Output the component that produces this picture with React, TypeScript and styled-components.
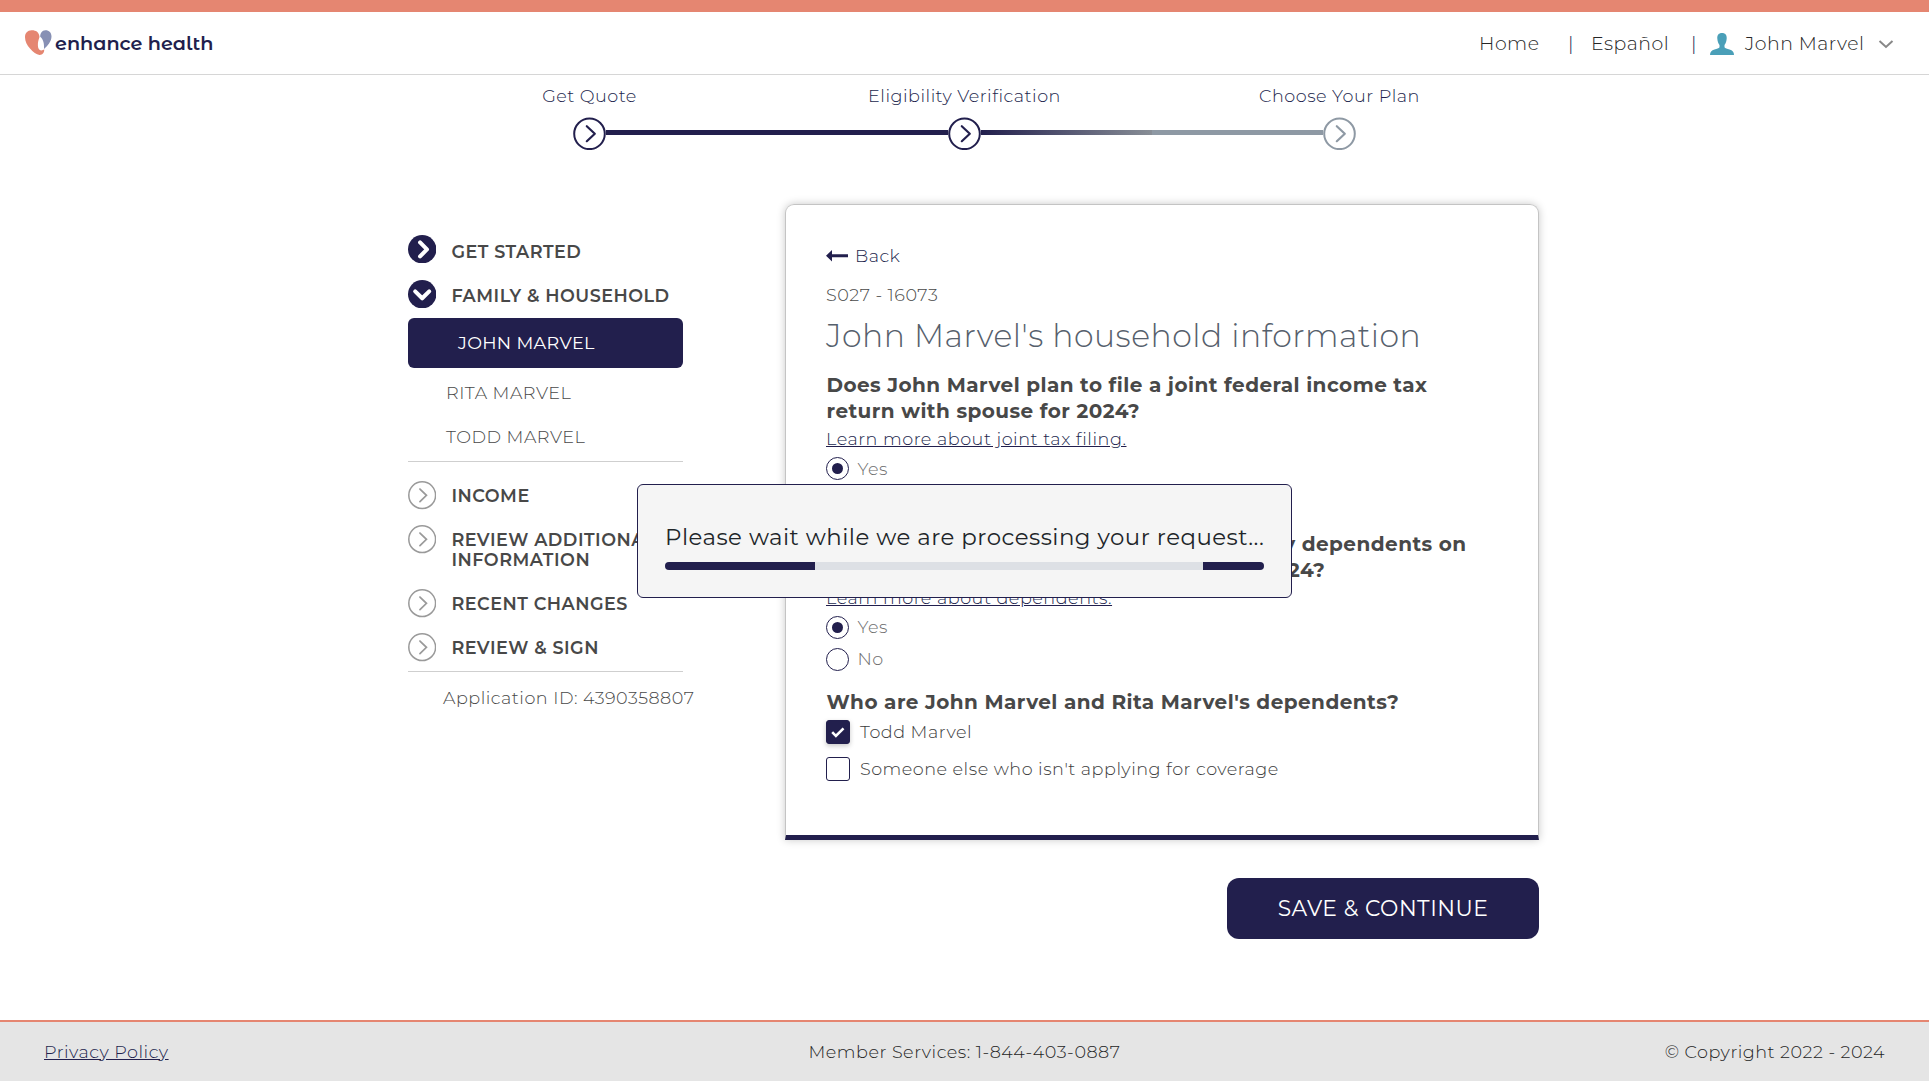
import React from "react";
import styled, { createGlobalStyle, css } from "styled-components";

const navy = "#221f4d";
const coral = "#e58671";

const GlobalStyle = createGlobalStyle`
  * { box-sizing: border-box; }
  body {
    margin: 0;
    background: #fff;
    color: #262626;
    font-family: Montserrat, "Open Sans", sans-serif;
    font-weight: 300;
    font-size: 17.6px;
    line-height: 24px;
    letter-spacing: 0.5px;
  }
  p, h1, h2 { margin: 0; }
`;

const Page = styled.div`
  display: flex;
  flex-direction: column;
  height: 1081px;
  overflow: hidden;
`;

/* Header */
const Header = styled.header`
  display: flex;
  justify-content: space-between;
  align-items: center;
  height: 75px;
  padding: 0 35px 0 25px;
  border-top: 12px solid ${coral};
  border-bottom: 1px solid #d6d6d6;
`;
const Brand = styled.div`
  display: flex;
  align-items: center;
  gap: 3px;
`;
const BrandName = styled.span`
  color: ${navy};
  font: 600 19.2px/24px "Montserrat Alternates", Montserrat, sans-serif;
  letter-spacing: -0.02px;
  padding-bottom: 1px;
`;
const TopNav = styled.nav`
  display: grid;
  grid-template-columns: 89px 23px 100px 19px 35px 133px 16px;
  align-items: center;
  padding-top: 1px;
  font-size: 18.9px;
`;
const Divider = styled.span`
  color: ${navy};
`;

/* Progress steps */
const Steps = styled.section`
  width: 1125px;
  margin: 9px auto 0;
`;
const StepLabels = styled.div`
  display: grid;
  grid-template-columns: repeat(3, 1fr);
  text-align: center;
  color: ${navy};
`;
const StepTrack = styled.div`
  display: flex;
  align-items: flex-start;
  width: 783px;
  margin: 9px auto 0;
`;
const StepLine = styled.div<{ $partial?: boolean }>`
  flex: 1;
  height: 5px;
  margin-top: 13px;
  background: ${(p) =>
    p.$partial ? `linear-gradient(90deg, ${navy} 0%, #888e96 50%, #8e99a4 50%)` : navy};
`;

/* Body */
const Content = styled.div`
  display: flex;
  gap: 102px;
  padding: 54px 0 0 408px;
  flex: 1;
`;
const Sidebar = styled.aside`
  width: 275px;
  padding-top: 31px;
  color: #484848;
`;
const NavItem = styled.div<{ $height: number; $drop: number }>`
  display: flex;
  gap: 15px;
  height: ${(p) => p.$height}px;
  font-weight: 600;
  line-height: 20px;
  white-space: nowrap;
  svg { flex: none; }
  span { padding-top: ${(p) => p.$drop}px; }
`;
const Person = styled.div<{ $active?: boolean }>`
  height: 44px;
  line-height: 44px;
  padding-left: 38px;
  ${(p) =>
    p.$active &&
    css`
      height: 50px;
      line-height: 50px;
      padding-left: 50px;
      margin-bottom: 3px;
      border-radius: 6px;
      background: ${navy};
      color: #fff;
      font-weight: 400;
      letter-spacing: 0.33px;
    `}
`;
const Rule = styled.div<{ $above?: number; $below: number }>`
  height: 1px;
  background: #cfcfcf;
  margin: ${(p) => p.$above ?? 0}px 0 ${(p) => p.$below}px;
`;
const AppId = styled.p`
  padding-left: 35px;
  line-height: 20px;
  white-space: nowrap;
`;

const Main = styled.main`
  display: flex;
  flex-direction: column;
  align-items: flex-end;
  gap: 38px;
`;
const Card = styled.section`
  width: 754px;
  height: 636px;
  padding: 39px 40px 0;
  border: 1px solid #c4c4c4;
  border-bottom: 5px solid ${navy};
  border-radius: 9px 9px 0 0;
  box-shadow: 0 0 8px rgba(0, 0, 0, 0.22);
  color: #484848;
`;
const BackLink = styled.a`
  display: flex;
  align-items: center;
  gap: 6px;
  color: ${navy};
`;
const ScreenCode = styled.p`
  margin-top: 15px;
`;
const Title = styled.h1`
  margin-top: 9px;
  font-size: 31.5px;
  font-weight: 300;
  line-height: 40px;
  color: #56606c;
`;
const Question = styled.h2<{ $gap: number }>`
  margin-top: ${(p) => p.$gap}px;
  padding-left: 0.5px;
  font-size: 20px;
  font-weight: 700;
  line-height: 26px;
  letter-spacing: 0.45px;
  white-space: nowrap;
`;
const HelpLink = styled.a`
  display: block;
  width: max-content;
  margin: 3px 0 6px;
  color: ${navy};
  letter-spacing: 0.53px;
  text-decoration: underline;
`;
const Option = styled.label<{ $gap?: number; $muted?: boolean }>`
  display: flex;
  align-items: center;
  height: ${(p) => (p.$muted ? 23 : 24)}px;
  gap: ${(p) => (p.$muted ? 8.5 : 10)}px;
  margin-top: ${(p) => p.$gap ?? 0}px;
  color: ${(p) => (p.$muted ? "#6e6e6e" : "#3c3c3c")};
`;
const RadioMark = styled.span<{ $on?: boolean }>`
  display: grid;
  place-items: center;
  width: 23px;
  height: 23px;
  border: 1px solid ${navy};
  border-radius: 50%;
  &::after {
    content: "";
    width: 11px;
    height: 11px;
    border-radius: 50%;
    background: ${(p) => (p.$on ? navy : "transparent")};
  }
`;
const CheckMark = styled.span<{ $on?: boolean }>`
  display: grid;
  place-items: center;
  width: 24px;
  height: 24px;
  border: 1px solid ${navy};
  border-radius: 3px;
  background: ${(p) => (p.$on ? navy : "#fff")};
  box-shadow: ${(p) => (p.$on ? "0 2px 5px rgba(0,0,0,.22)" : "none")};
`;
const SaveButton = styled.button`
  width: 312px;
  height: 61px;
  padding: 0 0 2px;
  border: 0;
  border-radius: 12px;
  background: ${navy};
  color: #fff;
  font: 400 21.8px/28px Montserrat, sans-serif;
  letter-spacing: 0.5px;
`;

/* Footer */
const Footer = styled.footer`
  display: grid;
  grid-template-columns: 1fr auto 1fr;
  align-items: center;
  height: 61px;
  padding: 0 44px;
  border-top: 2px solid ${coral};
  background: #e5e5e5;
  > :last-child { text-align: right; }
`;
const PolicyLink = styled.a`
  color: ${navy};
  text-decoration: underline;
`;

/* Processing dialog laid over the form */
const Dialog = styled.div`
  position: absolute;
  left: 637px;
  top: 484px;
  width: 655px;
  height: 114px;
  padding: 37px 27px 0;
  border: 1px solid ${navy};
  border-radius: 6px;
  background: #f5f5f5;
  color: #212529;
  font-size: 22.88px;
  font-weight: 400;
  line-height: 30px;
  letter-spacing: 0.48px;
  white-space: nowrap;
`;
const Bar = styled.div`
  display: flex;
  justify-content: space-between;
  height: 8px;
  margin-top: 10px;
  border-radius: 4px;
  overflow: hidden;
  background: #dde0e5;
`;
const BarFill = styled.div<{ $width: number }>`
  width: ${(p) => p.$width}px;
  background: ${navy};
`;

const StepIcon = ({ color = navy }: { color?: string }) => (
  <svg width="33" height="33" viewBox="0 0 33 33" fill="none" stroke={color}>
    <circle cx="16.5" cy="16.8" r="15.3" strokeWidth="2" />
    <path d="M13.8 9.200l8 7.500-8 7.500" strokeWidth="2.2" strokeLinecap="round" strokeLinejoin="round" />
  </svg>
);
const SolidIcon = ({ down }: { down?: boolean }) => (
  <svg width="28.4" height="28.4" viewBox="0 0 28 28" fill="none">
    <circle cx="14" cy="14" r="14" fill={navy} />
    <path
      d={down ? "M7.1 11.2L14 18l6.9-6.8" : "M11.9 7.3l6.8 6.9-6.8 6.9"}
      stroke="#fff"
      strokeWidth="4"
      strokeLinecap="round"
      strokeLinejoin="round"
    />
  </svg>
);
const OutlineIcon = () => (
  <svg width="28.4" height="28.4" viewBox="0 0 28 28" fill="none" stroke="#9a9a9a">
    <circle cx="14" cy="14" r="13.2" strokeWidth="1.5" />
    <path d="M11.8 7.9l6.4 6.2-6.4 6.2" strokeWidth="1.7" strokeLinecap="round" />
  </svg>
);
const Logo = () => (
  <svg width="27" height="26" viewBox="0 0 27 26">
    <path
      d="M6.5.3C10.5.1 14.2 2 14.5 7 13.4 10 12.8 12.500 12.900 15.500 13 18.500 14.100 20.400 16.200 20.400 17.500 20.400 18.600 19.900 19.200 19.300 19.500 22.500 17.500 25 14.500 24.900 11.500 24.600 8 22 5 18.500 2 15 0 11.500 0 7.200 0 3 2.500.5 6.500.3z"
      fill={coral}
    />
    <path d="M20.300.2C24 .1 26.500 2.500 26.500 6.500 26.500 11.500 22.500 16 19 19 19.300 14 18.500 9.500 15.200 6.800 15.200 3 17 .4 20.300.2z" fill="#8790b4" />
  </svg>
);
const Avatar = () => (
  <svg width="24" height="22" viewBox="0 0 24 22" fill="#4a9fb8">
    <path d="M12 0c3.300 0 5 2.200 4.700 5.500-.2 3-1 5-2.200 6.500v2.200c.6 1.100 2.700 1.400 5 2.300 3 1.100 4.500 2.300 4.500 5.500H0c0-3.200 1.500-4.400 4.500-5.500 2.300-.9 4.400-1.200 5-2.300V12C8.300 10.500 7.500 8.500 7.300 5.500 7 2.200 8.700 0 12 0z" />
  </svg>
);

export default function App() {
  return (
    <Page>
      <GlobalStyle />
      <Header>
        <Brand>
          <Logo />
          <BrandName>enhance health</BrandName>
        </Brand>
        <TopNav>
          <span>Home</span>
          <Divider>|</Divider>
          <span>Español</span>
          <Divider>|</Divider>
          <Avatar />
          <span>John Marvel</span>
          <svg width="16" height="10" viewBox="0 0 16 10" fill="none" stroke="#888" strokeWidth="2">
            <path d="M1.500 2l6.500 6 6.500-6" />
          </svg>
        </TopNav>
      </Header>

      <Steps>
        <StepLabels>
          <span>Get Quote</span>
          <span>Eligibility Verification</span>
          <span>Choose Your Plan</span>
        </StepLabels>
        <StepTrack>
          <StepIcon />
          <StepLine />
          <StepIcon />
          <StepLine $partial />
          <StepIcon color="#8e99a4" />
        </StepTrack>
      </Steps>

      <Content>
        <Sidebar>
          <NavItem $height={45} $drop={7}><SolidIcon /><span>GET STARTED</span></NavItem>
          <NavItem $height={38} $drop={6}><SolidIcon down /><span>FAMILY &amp; HOUSEHOLD</span></NavItem>
          <Person $active>JOHN MARVEL</Person>
          <Person>RITA MARVEL</Person>
          <Person>TODD MARVEL</Person>
          <Rule $above={2} $below={19.4} />
          <NavItem $height={44} $drop={5}><OutlineIcon /><span>INCOME</span></NavItem>
          <NavItem $height={64} $drop={5}>
            <OutlineIcon />
            <span>REVIEW ADDITIONAL<br />INFORMATION</span>
          </NavItem>
          <NavItem $height={44} $drop={5}><OutlineIcon /><span>RECENT CHANGES</span></NavItem>
          <NavItem $height={37.6} $drop={5}><OutlineIcon /><span>REVIEW &amp; SIGN</span></NavItem>
          <Rule $below={16} />
          <AppId>Application ID: 4390358807</AppId>
        </Sidebar>

        <Main>
          <Card>
            <BackLink>
              <svg width="23" height="12" viewBox="0 0 23 12" fill={navy}>
                <path d="M0 5.700L6 0v4.300h16v3H6v4.200z" />
              </svg>
              Back
            </BackLink>
            <ScreenCode>S027 - 16073</ScreenCode>
            <Title>John Marvel's household information</Title>

            <Question $gap={16}>
              Does John Marvel plan to file a joint federal income tax<br />
              return with spouse for 2024?
            </Question>
            <HelpLink>Learn more about joint tax filing.</HelpLink>
            <Option $muted><RadioMark $on />Yes</Option>
            <Option $muted $gap={9}><RadioMark />No</Option>

            <Question $gap={18.5}>
              Will John Marvel and Rita Marvel claim any dependents on<br />
              their joint federal income tax return for 2024?
            </Question>
            <HelpLink>Learn more about dependents.</HelpLink>
            <Option $muted><RadioMark $on />Yes</Option>
            <Option $muted $gap={9}><RadioMark />No</Option>

            <Question $gap={18.5}>Who are John Marvel and Rita Marvel's dependents?</Question>
            <Option $gap={5}>
              <CheckMark $on>
                <svg width="14" height="11" viewBox="0 0 14 11" fill="none" stroke="#fff" strokeWidth="2.600">
                  <path d="M1.200 5.200l3.700 3.700L12.500 1.300" />
                </svg>
              </CheckMark>
              Todd Marvel
            </Option>
            <Option $gap={13}><CheckMark />Someone else who isn't applying for coverage</Option>
          </Card>
          <SaveButton>SAVE &amp; CONTINUE</SaveButton>
        </Main>
      </Content>

      <Footer>
        <span><PolicyLink>Privacy Policy</PolicyLink></span>
        <span>Member Services: 1-844-403-0887</span>
        <span>© Copyright 2022 - 2024</span>
      </Footer>

      <Dialog>
        Please wait while we are processing your request...
        <Bar>
          <BarFill $width={150} />
          <BarFill $width={61} />
        </Bar>
      </Dialog>
    </Page>
  );
}
